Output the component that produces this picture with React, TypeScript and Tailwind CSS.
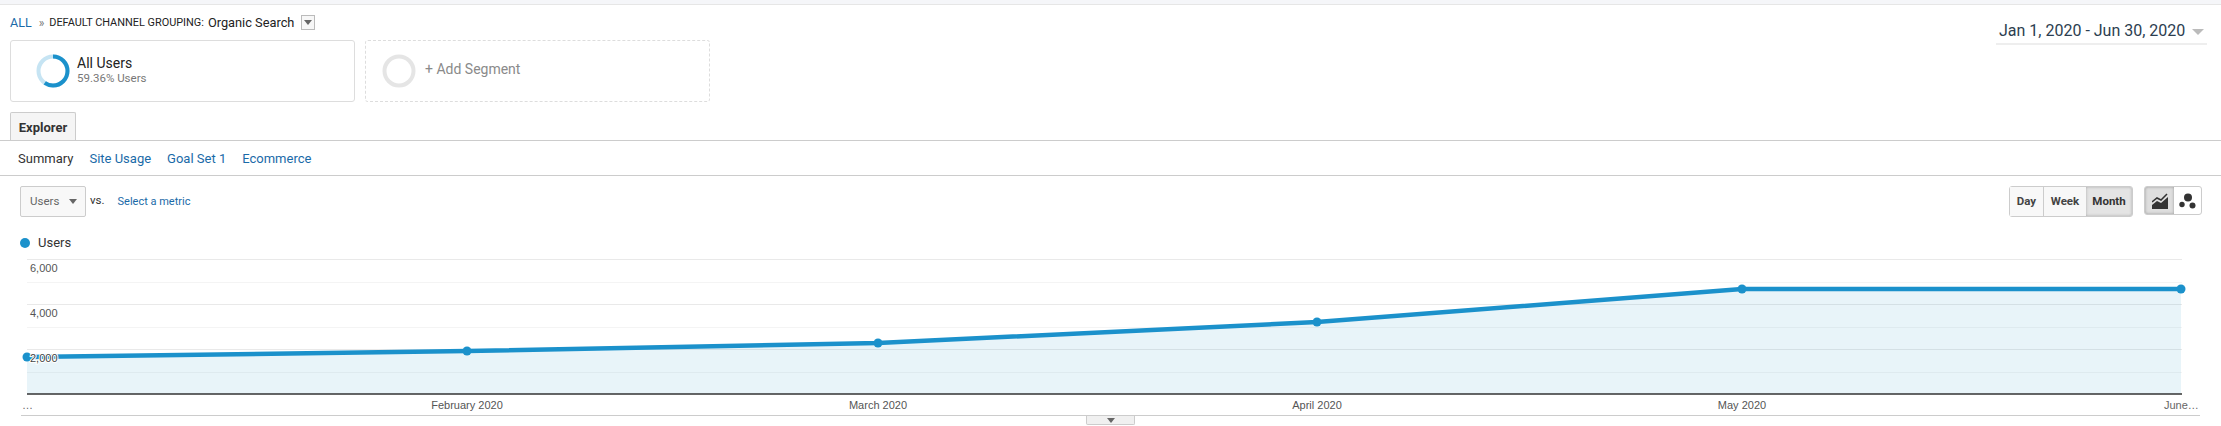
const ROBOTO = "font-['Roboto',sans-serif]";

const POINTS = [
  [27, 357],
  [467, 351],
  [878, 343],
  [1317, 322],
  [1742, 289],
  [2181, 289],
];

const X_LABELS = [
  { x: 467, text: "February 2020" },
  { x: 878, text: "March 2020" },
  { x: 1317, text: "April 2020" },
  { x: 1742, text: "May 2020" },
];

function Chart() {
  const top = 252;
  const y = (v: number) => v - top;
  const line = POINTS.map(([px, py]) => `${px},${y(py)}`).join(" ");
  const area = `27,${y(394)} ${line} 2181,${y(394)}`;

  return (
    <svg width="2221" height="163" className="block" style={{ fontFamily: "'Liberation Sans', sans-serif" }}>
      {[259, 304, 349].map((g) => (
        <line key={g} x1="27" x2="2182" y1={y(g) + 0.5} y2={y(g) + 0.5} stroke="#e9e9e9" />
      ))}
      {[282, 327, 372].map((g) => (
        <line key={g} x1="27" x2="2182" y1={y(g) + 0.5} y2={y(g) + 0.5} stroke="#f4f4f4" />
      ))}
      <polygon points={area} fill="#1a8fc9" fillOpacity="0.1" />
      <polyline points={line} fill="none" stroke="#1b91cb" strokeWidth="4.5" />
      {POINTS.map(([px, py]) => (
        <circle key={px} cx={px} cy={y(py)} r="4.5" fill="#1b91cb" />
      ))}
      <line x1="27" x2="2182" y1={y(394)} y2={y(394)} stroke="#333333" strokeWidth="1.5" />
      <text x="30" y={y(272)} fontSize="11" fill="#555555">6,000</text>
      <text x="30" y={y(317)} fontSize="11" fill="#555555">4,000</text>
      <text x="30" y={y(362)} fontSize="11" fill="#444444" stroke="#ffffff" strokeWidth="2" paintOrder="stroke">2,000</text>
      <text x="22" y={y(409)} fontSize="11" fill="#666666">…</text>
      {X_LABELS.map((l) => (
        <text key={l.x} x={l.x} y={y(409)} fontSize="11" fill="#555555" textAnchor="middle">{l.text}</text>
      ))}
      <text x="2164" y={y(409)} fontSize="11" fill="#666666">June…</text>
    </svg>
  );
}

function Donut({ color, track, dash }: { color: string; track: string; dash?: string }) {
  return (
    <svg width="34" height="34" viewBox="0 0 34 34" className="shrink-0">
      <circle cx="17" cy="17" r="14.5" fill="none" stroke={track} strokeWidth="4" />
      {dash && (
        <circle
          cx="17"
          cy="17"
          r="14.5"
          fill="none"
          stroke={color}
          strokeWidth="4"
          strokeDasharray={dash}
          transform="rotate(-90 17 17)"
        />
      )}
    </svg>
  );
}

function Caret({ className }: { className: string }) {
  return <span className={`inline-block h-0 w-0 border-x-[4px] border-t-[5px] border-x-transparent ${className}`} />;
}

export default function App() {
  return (
    <div className={`h-[426px] w-[2221px] overflow-hidden bg-white ${ROBOTO}`}>
      <div className="h-[5px] border-b border-[#e6e6e6] bg-[#f5f6f9]" />

      <div className="flex h-[136px] border-b border-[#cccccc]">
        <div className="flex flex-col pl-[10px]">
          <div className="flex h-[36px] items-center pt-[1px]">
            <span className="text-[12.5px] text-[#1a6aa8]">ALL</span>
            <span className="ml-[7px] text-[12px] text-[#777777]">»</span>
            <span className="ml-[5px] text-[10.9px] text-[#222222]">DEFAULT CHANNEL GROUPING:</span>
            <span className="ml-[4px] text-[12.8px] text-[#222222]">Organic Search</span>
            <span className="ml-[7px] flex h-[15px] w-[14px] items-center justify-center border border-[#bbbbbb] bg-[#f7f7f7]">
              <Caret className="border-t-[#666666]" />
            </span>
          </div>

          <div className="flex gap-[10px]">
            <div className="flex h-[62px] w-[345px] items-center rounded-[3px] border border-[#dddddd] pl-[25px]">
              <Donut color="#1b91cb" track="#c6e4f3" dash="54 91" />
              <div className="ml-[7px] flex flex-col pb-[2px]">
                <span className="text-[14px] leading-[18px] text-[#222222]">All Users</span>
                <span className="text-[11.5px] leading-[13px] text-[#777777]">59.36% Users</span>
              </div>
            </div>
            <div className="flex h-[62px] w-[345px] items-center rounded-[3px] border border-dashed border-[#dddddd] pl-[16px]">
              <Donut color="#e5e5e5" track="#e5e5e5" />
              <span className="ml-[9px] pb-[2px] text-[14px] text-[#8a8a8a]">+ Add Segment</span>
            </div>
          </div>

          <div className="mt-[10px] flex h-[29px] w-[66px] items-center justify-center rounded-t-[2px] border border-b-0 border-[#cccccc] bg-[#f5f5f5] pt-[2px] text-[13px] font-bold text-[#333333]">
            Explorer
          </div>
        </div>

        <div className="ml-auto mr-[14px] mt-[13px] flex h-[27px] w-[211px] items-start justify-between whitespace-nowrap border-b-2 border-[#eeeeee] pl-[3px] pr-[3px] text-[16px] leading-[26px] text-[#2c3e50]">
          <span>Jan 1, 2020 - Jun 30, 2020</span>
          <Caret className="mt-[11px] border-x-[6px] border-t-[6px] border-t-[#bbbbbb]" />
        </div>
      </div>

      <div className="flex h-[35px] items-center gap-[16px] border-b border-[#cccccc] pl-[18px] pt-[2px] text-[13px] text-[#1a6aa8]">
        <span className="text-[#333333]">Summary</span>
        <span>Site Usage</span>
        <span>Goal Set 1</span>
        <span>Ecommerce</span>
      </div>

      <div className="flex items-start pl-[20px] pr-[19px] pt-[10px]">
        <div className="flex h-[31px] w-[66px] items-center justify-between rounded-[2px] border border-[#cccccc] bg-[#f8f8f8] pl-[9px] pr-[8px] text-[11.5px] text-[#666666]">
          <span>Users</span>
          <Caret className="border-t-[#666666]" />
        </div>
        <span className="ml-[4px] mt-[6px] text-[11.5px] text-[#333333]">vs.</span>
        <span className="ml-[13px] mt-[8px] text-[11px] text-[#1a6aa8]">Select a metric</span>

        <div className="ml-auto flex h-[31px] rounded-[3px] border border-[#cccccc] text-[11.5px] font-bold text-[#444444]">
          <span className="flex w-[34px] items-center justify-center border-r border-[#cccccc] bg-[#f8f8f8]">Day</span>
          <span className="flex w-[42px] items-center justify-center bg-[#f8f8f8]">Week</span>
          <span className="flex w-[46px] items-center justify-center rounded-r-[2px] bg-[#e4e4e4] text-[#333333] shadow-[inset_0_0_3px_#aaaaaa]">Month</span>
        </div>

        <div className="ml-[11px] flex h-[29px] w-[58px] rounded-[3px] border border-[#cccccc]">
          <span className="flex w-[29px] items-center justify-center rounded-l-[2px] bg-[#dedede] shadow-[inset_0_0_3px_#999999]">
            <svg width="16" height="16" viewBox="0 0 16 16">
              <path d="M0 9 L5 5 L9 7 L15 1" fill="none" stroke="#333333" strokeWidth="1.5" />
              <path d="M0 16 V12 L5 8 L9 10 L16 4 V16 Z" fill="#333333" />
            </svg>
          </span>
          <span className="flex flex-1 items-center justify-center">
            <svg width="17" height="16" viewBox="0 0 17 16">
              <circle cx="9" cy="4.5" r="4" fill="#333333" />
              <circle cx="3" cy="11.5" r="2.7" fill="#333333" />
              <circle cx="13.5" cy="12.5" r="3" fill="#333333" />
            </svg>
          </span>
        </div>
      </div>

      <div className="mt-[17px] flex h-[18px] items-center pl-[20px] text-[13px] text-[#333333]">
        <span className="h-[10px] w-[10px] rounded-full bg-[#1b91cb]" />
        <span className="ml-[8px]">Users</span>
      </div>

      <Chart />

      <div className="mx-[21px] flex justify-center border-t border-[#cccccc]">
        <div className="flex h-[9px] w-[49px] justify-center rounded-b-[2px] border border-t-0 border-[#cccccc] bg-[#f0f0f0] pt-[2px]">
          <Caret className="border-t-[#666666]" />
        </div>
      </div>
    </div>
  );
}
